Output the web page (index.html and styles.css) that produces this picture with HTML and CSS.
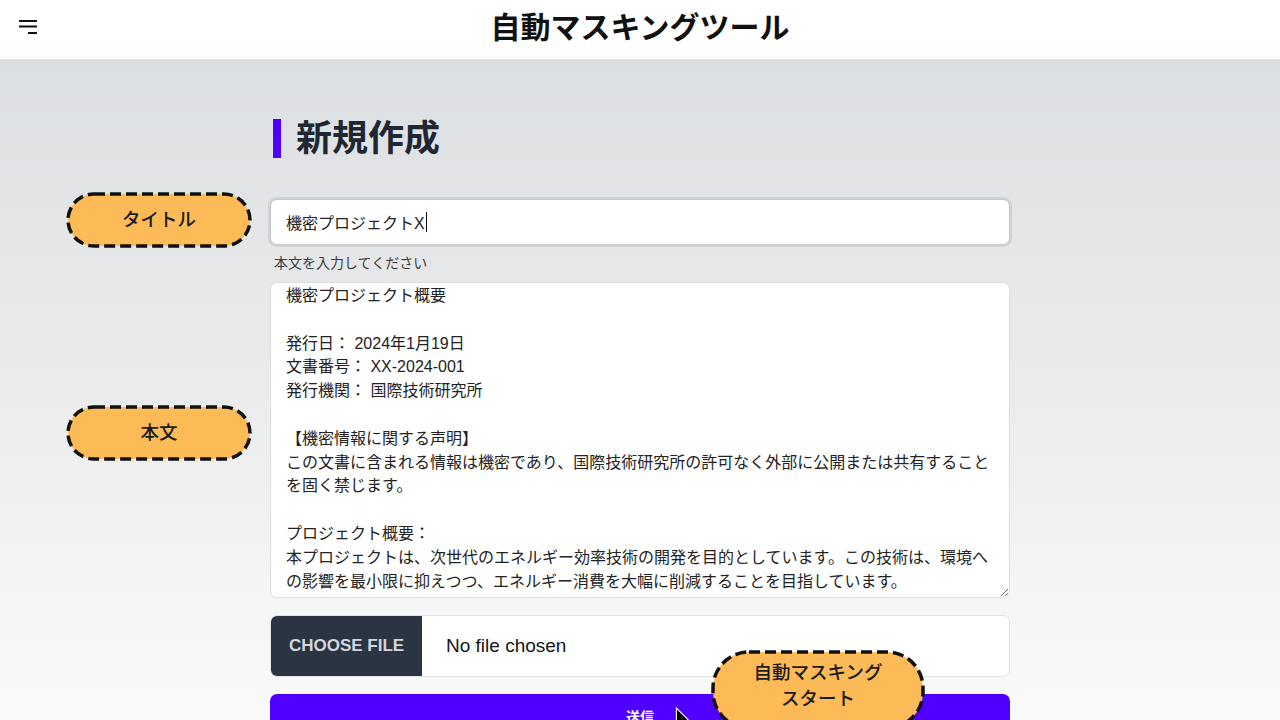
FILE: index.html
```html
<!DOCTYPE html>
<html lang="ja">
<head>
<meta charset="utf-8">
<title>自動マスキングツール</title>
<link rel="stylesheet" href="styles.css">
</head>
<body>
<header class="topbar">
  <button class="menu-btn" aria-label="menu">
    <svg width="20" height="20" viewBox="0 0 20 20">
      <path d="M1 3h18M1 8.5h18M10 15h9" stroke="#111" stroke-width="2" fill="none"/>
    </svg>
  </button>
  <h1 class="app-title">自動マスキングツール</h1>
</header>
<main class="main">
  <div class="column">
    <h2 class="page-title">新規作成</h2>
    <div class="title-input">機密プロジェクトX<span class="caret"></span></div>
    <label class="field-label" for="body">本文を入力してください</label>
    <textarea id="body" class="body-input">機密プロジェクト概要

発行日： 2024年1月19日
文書番号： XX-2024-001
発行機関： 国際技術研究所

【機密情報に関する声明】
この文書に含まれる情報は機密であり、国際技術研究所の許可なく外部に公開または共有することを固く禁じます。

プロジェクト概要：
本プロジェクトは、次世代のエネルギー効率技術の開発を目的としています。この技術は、環境への影響を最小限に抑えつつ、エネルギー消費を大幅に削減することを目指しています。

技術詳細：
</textarea>
    <div class="file-input">
      <span class="file-btn">CHOOSE FILE</span>
      <span class="file-name">No file chosen</span>
    </div>
    <button class="submit-btn">送信</button>
  </div>

  <div class="bubble bubble-title">
    <svg class="bubble-shape" width="186" height="56" viewBox="0 0 186 56"><rect x="2" y="2" width="182" height="52" rx="26" fill="#fdbb57" stroke="#111" stroke-width="3.5" stroke-dasharray="11 5"/></svg>
    <span class="bubble-text">タイトル</span>
  </div>
  <div class="bubble bubble-body">
    <svg class="bubble-shape" width="186" height="56" viewBox="0 0 186 56"><rect x="2" y="2" width="182" height="52" rx="26" fill="#fdbb57" stroke="#111" stroke-width="3.5" stroke-dasharray="11 5"/></svg>
    <span class="bubble-text">本文</span>
  </div>
  <div class="bubble bubble-start">
    <svg class="bubble-shape" width="214" height="80" viewBox="0 0 214 80"><rect x="2" y="2" width="210" height="76" rx="36" fill="#fdbb57" stroke="#111" stroke-width="3.5" stroke-dasharray="11 5"/></svg>
    <span class="bubble-text">自動マスキング<br>スタート</span>
  </div>
  <svg class="pointer" width="20" height="28" viewBox="0 0 18 26"><path d="M1 1 L1 22 L6 17 L10 25 L13 23.5 L9 16 L16 16 Z" fill="#000" stroke="#fff" stroke-width="1"/></svg>
</main>
</body>
</html>
```

FILE: styles.css
```css
html, body {
  margin: 0;
  padding: 0;
  height: 720px;
  overflow: hidden;
}
body {
  font-family: "Liberation Sans", "Noto Sans CJK JP", sans-serif;
  color: #1a1a1a;
  background: #f9f9f9;
}
.topbar {
  height: 59px;
  background: #fff;
  border-bottom: 1px solid #e2e2e2;
  display: flex;
  align-items: center;
  justify-content: center;
  position: relative;
}
.menu-btn {
  position: absolute;
  left: 18px;
  top: 18px;
  padding: 0;
  border: 0;
  background: none;
  width: 20px;
  height: 20px;
}
.menu-btn svg { display: block; }
.app-title {
  margin: 0;
  font-size: 30px;
  font-weight: 700;
  color: #111;
  line-height: 40px;
  margin-top: -4px;
}
.main {
  position: relative;
  height: 660px;
  background: linear-gradient(to bottom, #dcdfe2 0%, #eceded 55%, #fafafa 100%);
  overflow: hidden;
}
.column {
  width: 740px;
  margin: 0 auto;
  padding-top: 59px;
  display: flex;
  flex-direction: column;
}
.page-title {
  margin: 0 0 41px 3px;
  height: 39px;
  border-left: 8px solid #5000ff;
  padding-left: 15px;
  font-size: 36px;
  font-weight: 700;
  line-height: 39px;
  color: #1f2733;
}
.title-input {
  height: 44px;
  background: #fff;
  border: 1px solid #c3c6ca;
  border-radius: 7px;
  box-shadow: 0 0 0 2px #cfd2d6;
  padding: 0 15px;
  display: flex;
  align-items: center;
  font-size: 16px;
  color: #222;
}
.caret {
  display: inline-block;
  width: 1px;
  height: 20px;
  background: #111;
  margin-left: 1px;
}
.field-label {
  margin-top: 8px;
  margin-left: 4px;
  font-size: 14px;
  line-height: 20px;
  color: #3c3c3c;
}
.body-input {
  margin-top: 9px;
  box-sizing: border-box;
  width: 740px;
  height: 316px;
  border: 1px solid #dedede;
  border-radius: 7px;
  background: #fff;
  padding: 1px 14px 0 15px;
  font-family: "Liberation Sans", "Noto Sans CJK JP", sans-serif;
  font-size: 16px;
  line-height: 23.8px;
  color: #222;
  overflow: hidden;
  resize: vertical;
  outline: none;
}
.file-input {
  margin-top: 17px;
  height: 60px;
  display: flex;
  align-items: stretch;
  border: 1px solid #e2e2e2;
  border-radius: 7px;
  background: #fff;
  overflow: hidden;
}
.file-btn {
  width: 151px;
  background: #2b3442;
  color: #d3d6db;
  font-size: 17px;
  font-weight: 700;
  display: flex;
  align-items: center;
  justify-content: center;
}
.file-name {
  display: flex;
  align-items: center;
  padding-left: 24px;
  font-size: 19px;
  color: #151515;
}
.submit-btn {
  margin-top: 17px;
  height: 44px;
  border: 0;
  border-radius: 7px;
  background: #5000ff;
  color: #fff;
  font-family: "Liberation Sans", "Noto Sans CJK JP", sans-serif;
  font-size: 14px;
  font-weight: 700;
}
.bubble {
  position: absolute;
  display: flex;
  align-items: center;
  justify-content: center;
}
.bubble-shape {
  position: absolute;
  left: 0;
  top: 0;
}
.bubble-text {
  position: relative;
  font-size: 18.5px;
  font-weight: 500;
  color: #1a1a1a;
  text-align: center;
  line-height: 26px;
}
.bubble-title {
  left: 66px;
  top: 132px;
  width: 186px;
  height: 56px;
}
.bubble-body {
  left: 66px;
  top: 345px;
  width: 186px;
  height: 56px;
}
.bubble-start {
  left: 711px;
  top: 590px;
  width: 214px;
  height: 80px;
  align-items: flex-start;
}
.bubble-start .bubble-text {
  padding-top: 10px;
}
.pointer {
  position: absolute;
  left: 675px;
  top: 647px;
}
```
